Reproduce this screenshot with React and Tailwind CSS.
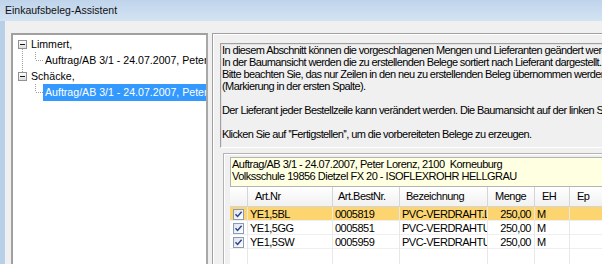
import React from "react";

function Expander({ x, y }) {
  return (
    <g>
      <rect x={x + 0.5} y={y + 0.5} width="8" height="8" fill="url(#expg)" stroke="#919191" />
      <line x1={x + 2} y1={y + 4.5} x2={x + 7} y2={y + 4.5} stroke="#1a1a1a" />
    </g>
  );
}

function Tree() {
  return (
    <div className="w-[197px] h-[240px] shrink-0 bg-white border-2 border-t-[#a0a0a0] border-l-[#a0a0a0] border-r-[#a8a8a8] border-b-[#a8a8a8] overflow-hidden">
      <div className="relative pt-[1px] text-[10.6px] leading-[16px] text-black">
        <svg className="absolute left-0 top-0" width="193" height="80" shapeRendering="crispEdges">
          <defs>
            <linearGradient id="expg" x1="0" y1="0" x2="0" y2="1">
              <stop offset="0" stopColor="#ffffff" />
              <stop offset="1" stopColor="#dcdcdc" />
            </linearGradient>
          </defs>
          <line x1="9.5" y1="14" x2="9.5" y2="37" stroke="#a0a0a0" strokeDasharray="1 1" />
          <line x1="22.5" y1="17" x2="22.5" y2="25" stroke="#a0a0a0" strokeDasharray="1 1" />
          <line x1="23" y1="25.5" x2="30" y2="25.5" stroke="#a0a0a0" strokeDasharray="1 1" />
          <line x1="22.5" y1="49" x2="22.5" y2="57" stroke="#a0a0a0" strokeDasharray="1 1" />
          <line x1="23" y1="57.5" x2="30" y2="57.5" stroke="#a0a0a0" strokeDasharray="1 1" />
          <Expander x={5} y={5} />
          <Expander x={5} y={37} />
        </svg>
        <div className="h-[16px] pl-[18px] whitespace-nowrap">Limmert,</div>
        <div className="h-[16px] pl-[32px] whitespace-nowrap">Auftrag/AB 3/1 - 24.07.2007, Peter Lorenz</div>
        <div className="h-[16px] pl-[18px] whitespace-nowrap">Schäcke,</div>
        <div className="h-[16px] pl-[30px] whitespace-nowrap">
          <div className="bg-[#3399ff] text-white pl-[2px] h-[17px]">Auftrag/AB 3/1 - 24.07.2007, Peter Lorenz</div>
        </div>
      </div>
    </div>
  );
}

function Check() {
  return (
    <div className="w-[11px] h-[11px] border border-[#8a9bb5] bg-gradient-to-br from-[#dfe3ea] to-[#ffffff] flex items-center justify-center">
      <svg width="9" height="9" viewBox="0 0 9 9">
        <path d="M1.5 4.2 L3.6 6.4 L7.6 1.8" fill="none" stroke="#2c4592" strokeWidth="1.5" />
      </svg>
    </div>
  );
}

const rows = [
  { nr: "YE1,5BL", best: "0005819", bez: "PVC-VERDRAHT.L", sel: true },
  { nr: "YE1,5GG", best: "0005851", bez: "PVC-VERDRAHTUNG" },
  { nr: "YE1,5SW", best: "0005959", bez: "PVC-VERDRAHTUNG" },
];

function Grid() {
  const cols = "grid grid-cols-[18px_85px_67px_88px_47px_35px_120px]";
  return (
    <div className="bg-white text-[11px] tracking-[-0.5px] text-black h-[80px]">
      <div className={cols + " h-[20px] border-b border-[#d5d5d5] bg-gradient-to-b from-[#ffffff] to-[#f1f1f1]"}>
        <div className="border-r border-[#d5d5d5]" />
        <div className="border-r border-[#d5d5d5] pl-[7px] leading-[19px]">Art.Nr</div>
        <div className="border-r border-[#d5d5d5] pl-[5px] leading-[19px]">Art.BestNr.</div>
        <div className="border-r border-[#d5d5d5] pl-[6px] leading-[19px]">Bezeichnung</div>
        <div className="border-r border-[#d5d5d5] pl-[7px] leading-[19px]">Menge</div>
        <div className="border-r border-[#d5d5d5] pl-[7px] leading-[19px]">EH</div>
        <div className="pl-[7px] leading-[19px]">Ep</div>
      </div>
      {rows.map((r) => (
        <div
          key={r.nr}
          className={cols + " h-[14px] leading-[14px] border-b border-[#efefef] " + (r.sel ? "bg-[#fcd570]" : "")}
        >
          <div className="border-r border-[#e8e8e8] flex items-center pl-[3px]">
            <Check />
          </div>
          <div className="border-r border-[#e8e8e8] pl-[2px] overflow-hidden whitespace-nowrap">{r.nr}</div>
          <div className="border-r border-[#e8e8e8] pl-[2px] overflow-hidden whitespace-nowrap">{r.best}</div>
          <div className="border-r border-[#e8e8e8] pl-[2px] overflow-hidden whitespace-nowrap">{r.bez}</div>
          <div className="border-r border-[#e8e8e8] pr-[3px] text-right overflow-hidden whitespace-nowrap">250,00</div>
          <div className="border-r border-[#e8e8e8] pl-[2px]">M</div>
          <div />
        </div>
      ))}
      <div className={cols + " h-[20px]"}>
        <div className="border-r border-[#e8e8e8]" />
        <div className="border-r border-[#e8e8e8]" />
        <div className="border-r border-[#e8e8e8]" />
        <div className="border-r border-[#e8e8e8]" />
        <div className="border-r border-[#e8e8e8]" />
        <div className="border-r border-[#e8e8e8]" />
        <div />
      </div>
    </div>
  );
}

export default function App() {
  return (
    <div className="w-[602px] h-[264px] overflow-hidden flex flex-col bg-[#f0f0f0] font-['Liberation_Sans',Arial,sans-serif] text-black">
      <div className="h-[21px] shrink-0 pl-[5px] pt-[3px] bg-gradient-to-b from-[#bfd4eb] to-[#d3e3f3] text-[10.5px] leading-[14px] text-[#111]">
        Einkaufsbeleg-Assistent
      </div>
      <div className="flex flex-1 min-h-0 overflow-hidden">
        <div className="w-[5px] shrink-0 bg-[#b8cfe8]" />
        <div className="flex shrink-0 pt-[12px]">
          <div className="pl-[6px] pr-[4px] shrink-0">
            <Tree />
          </div>
          <div className="w-[420px] shrink-0 border-l border-t border-[#a0a0a0] shadow-[inset_1px_1px_0_#ffffff] pt-[9px] pl-[7px]">
            <div className="h-[105px] border-t border-l border-[#a0a0a0] border-b border-b-white shadow-[inset_1px_1px_0_#e3e3e3] pl-[1px] text-[11px] tracking-[-0.6px] leading-[12px] whitespace-nowrap overflow-hidden">
              <div>In diesem Abschnitt können die vorgeschlagenen Mengen und Lieferanten geändert werden.</div>
              <div>In der Baumansicht werden die zu erstellenden Belege sortiert nach Lieferant dargestellt.</div>
              <div>Bitte beachten Sie, das nur Zeilen in den neu zu erstellenden Beleg übernommen werden, die markiert sind</div>
              <div>(Markierung in der ersten Spalte).</div>
              <div className="h-[12px]" />
              <div>Der Lieferant jeder Bestellzeile kann verändert werden. Die Baumansicht auf der linken Seite wird aktualisiert.</div>
              <div className="h-[12px]" />
              <div>Klicken Sie auf ''Fertigstellen'', um die vorbereiteten Belege zu erzeugen.</div>
            </div>
            <div className="mt-[5px] ml-[3px] border-t border-l border-[#b4b4b4] shadow-[inset_1px_1px_0_#ffffff] pt-[3px] pl-[6px]">
              <div className="h-[30px] bg-[#ffffe1] border border-[#b4b4b4] pl-[1px] text-[11px] tracking-[-0.5px] leading-[12px] whitespace-nowrap overflow-hidden">
                <div>Auftrag/AB 3/1 - 24.07.2007, Peter Lorenz, 2100&nbsp; Korneuburg</div>
                <div>Volksschule 19856 Dietzel FX 20 - ISOFLEXROHR HELLGRAU</div>
              </div>
              <Grid />
            </div>
          </div>
        </div>
      </div>
    </div>
  );
}
